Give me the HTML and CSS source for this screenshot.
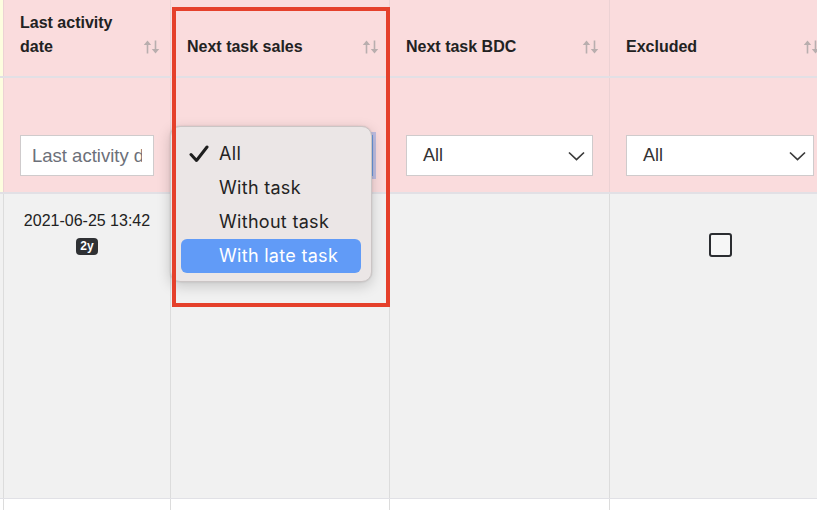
FILE: index.html
```html
<!DOCTYPE html>
<html>
<head>
<meta charset="utf-8">
<link rel="stylesheet" href="styles.css">
</head>
<body>
<div class="page">
  <div class="viewport">
    <div class="table">
      <div class="row head">
        <div class="edge"></div>
        <div class="cell th"><span class="title">Last activity<br>date</span><svg class="sort" viewBox="0 0 17 14" width="17" height="14"><path d="M4.5 3.5V13.5M12.5 0.5V10.5" stroke="currentColor" stroke-width="1.6"/><path d="M0.8 5L4.5 0.5L8.2 5Z M8.8 9L12.5 13.5L16.2 9Z" fill="currentColor"/></svg></div>
        <div class="cell th"><span class="title">Next task sales</span><svg class="sort" viewBox="0 0 17 14" width="17" height="14"><path d="M4.5 3.5V13.5M12.5 0.5V10.5" stroke="currentColor" stroke-width="1.6"/><path d="M0.8 5L4.5 0.5L8.2 5Z M8.8 9L12.5 13.5L16.2 9Z" fill="currentColor"/></svg></div>
        <div class="cell th"><span class="title">Next task BDC</span><svg class="sort" viewBox="0 0 17 14" width="17" height="14"><path d="M4.5 3.5V13.5M12.5 0.5V10.5" stroke="currentColor" stroke-width="1.6"/><path d="M0.8 5L4.5 0.5L8.2 5Z M8.8 9L12.5 13.5L16.2 9Z" fill="currentColor"/></svg></div>
        <div class="cell th"><span class="title">Excluded</span><svg class="sort" viewBox="0 0 17 14" width="17" height="14"><path d="M4.5 3.5V13.5M12.5 0.5V10.5" stroke="currentColor" stroke-width="1.6"/><path d="M0.8 5L4.5 0.5L8.2 5Z M8.8 9L12.5 13.5L16.2 9Z" fill="currentColor"/></svg></div>
      </div>
      <div class="row filters">
        <div class="edge"></div>
        <div class="cell tf"><div class="input"><span class="placeholder">Last activity date</span></div></div>
        <div class="cell tf"><div class="select focused"><span>All</span><svg class="chev" viewBox="0 0 17 10" width="17" height="10"><path d="M1 1.5L8.5 8.5L16 1.5" fill="none" stroke="currentColor" stroke-width="1.7"/></svg></div></div>
        <div class="cell tf"><div class="select"><span>All</span><svg class="chev" viewBox="0 0 17 10" width="17" height="10"><path d="M1 1.5L8.5 8.5L16 1.5" fill="none" stroke="currentColor" stroke-width="1.7"/></svg></div></div>
        <div class="cell tf"><div class="select"><span>All</span><svg class="chev" viewBox="0 0 17 10" width="17" height="10"><path d="M1 1.5L8.5 8.5L16 1.5" fill="none" stroke="currentColor" stroke-width="1.7"/></svg></div></div>
      </div>
      <div class="row data">
        <div class="edge"></div>
        <div class="cell td date"><span>2021-06-25 13:42</span><span class="badge">2y</span></div>
        <div class="cell td"></div>
        <div class="cell td"></div>
        <div class="cell td check"><span class="checkbox"></span></div>
      </div>
      <div class="row next">
        <div class="edge"></div>
        <div class="cell"></div>
        <div class="cell"></div>
        <div class="cell"></div>
        <div class="cell"></div>
      </div>
    </div>
  </div>

  <div class="menu">
    <div class="item"><svg class="tick" viewBox="0 0 20 18" width="20" height="18"><path d="M2 9.5L7.5 15.5L18 2" fill="none" stroke="currentColor" stroke-width="3" stroke-linecap="round" stroke-linejoin="round"/></svg>All</div>
    <div class="item">With task</div>
    <div class="item">Without task</div>
    <div class="item active">With late task</div>
  </div>

  <div class="annotation"></div>
</div>
</body>
</html>
```

FILE: styles.css
```css
* { box-sizing: border-box; }

html, body {
  margin: 0;
  padding: 0;
  background: #ffffff;
}

.page {
  position: relative;
  width: 826px;
  height: 510px;
  overflow: hidden;
  font-family: "Liberation Sans", Arial, sans-serif;
  color: #222;
}

.viewport {
  width: 817px;
  height: 510px;
  overflow: hidden;
}

.table {
  width: 830px;
}

.row {
  display: grid;
  grid-template-columns: 3px 167px 219px 220px 221px;
}

.cell {
  border-left: 1px solid #dedbdc;
}

.edge {
  background: #fdfddf;
}

/* header row */
.head {
  height: 78px;
  background: #fadcdd;
  border-bottom: 2px solid #e2e0e5;
}

.th {
  display: flex;
  align-items: flex-end;
  justify-content: space-between;
  padding: 0 10px 17px 16px;
}

.head .cell {
  border-left-color: #ecd2d4;
}

.title {
  font-weight: bold;
  font-size: 16px;
  line-height: 24px;
  color: #222;
}

.sort {
  color: #b8aeae;
  margin-bottom: 5px;
  flex: none;
}

/* filter row */
.filters {
  height: 116px;
  background: #fadcdd;
  border-bottom: 2px solid #e2e0e5;
}

.filters .cell {
  border-left-color: #ecd2d4;
}

.tf {
  display: flex;
  align-items: flex-end;
  padding: 0 16px 16px 16px;
}

.input,
.select {
  width: 100%;
  height: 41px;
  background: #fff;
  border: 1px solid #cfcbcc;
  display: flex;
  align-items: center;
  overflow: hidden;
  white-space: nowrap;
}

.input {
  padding: 0 11px 0 11px;
}

.placeholder {
  display: block;
  overflow: hidden;
  font-size: 18.5px;
  color: #6c7079;
}

.select {
  justify-content: space-between;
  padding: 0 7px 0 16px;
  font-size: 18px;
  color: #333;
}

.select.focused {
  border-color: #6d9be0;
  box-shadow: 0 0 0 3px rgba(120, 150, 230, 0.45);
}

.chev {
  color: #3a3a3a;
}

/* data row */
.data {
  height: 305px;
  background: #f1f1f1;
  border-bottom: 1px solid #e1e1e6;
}

.data .edge {
  background: #f1f1f1;
}

.data .cell {
  border-left-color: #dcdcdc;
}

.date {
  display: flex;
  flex-direction: column;
  align-items: center;
  padding-top: 17px;
  font-size: 16px;
  line-height: 20px;
  color: #222;
}

.badge {
  margin-top: 7px;
  background: #2f3134;
  color: #fff;
  font-weight: bold;
  font-size: 12px;
  line-height: 17px;
  padding: 0 4px;
  border-radius: 4px;
}

.check {
  display: flex;
  justify-content: center;
  padding-top: 39px;
}

.checkbox {
  display: block;
  width: 23px;
  height: 24px;
  border: 2.5px solid #2b2d31;
  border-radius: 3px;
  background: #f6f6f6;
}

.next {
  height: 12px;
  background: #fff;
}

.next .edge {
  background: #fff;
}

.next .cell {
  border-left-color: #dcdcdc;
}

/* native dropdown menu */
.menu {
  position: absolute;
  left: 170px;
  top: 126px;
  width: 202px;
  height: 156px;
  padding: 10px;
  background: #ebe6e6;
  border: 1px solid #cbc5c5;
  border-radius: 10px;
  box-shadow: 0 4px 14px rgba(0, 0, 0, 0.18), 0 0 2px rgba(0, 0, 0, 0.15);
  font-family: Inter, "Noto Sans", sans-serif;
  font-size: 18px;
  color: #232323;
}

.item {
  position: relative;
  height: 34px;
  line-height: 34px;
  padding-left: 38px;
  border-radius: 6px;
  letter-spacing: 0.3px;
}

.item.active {
  background: #619bf7;
  color: #fff;
}

.tick {
  position: absolute;
  left: 8px;
  top: 8px;
  color: #1e1e1e;
}

/* red annotation rectangle */
.annotation {
  position: absolute;
  left: 172px;
  top: 7px;
  width: 218px;
  height: 300px;
  border: 4.5px solid #e5402b;
}
```
